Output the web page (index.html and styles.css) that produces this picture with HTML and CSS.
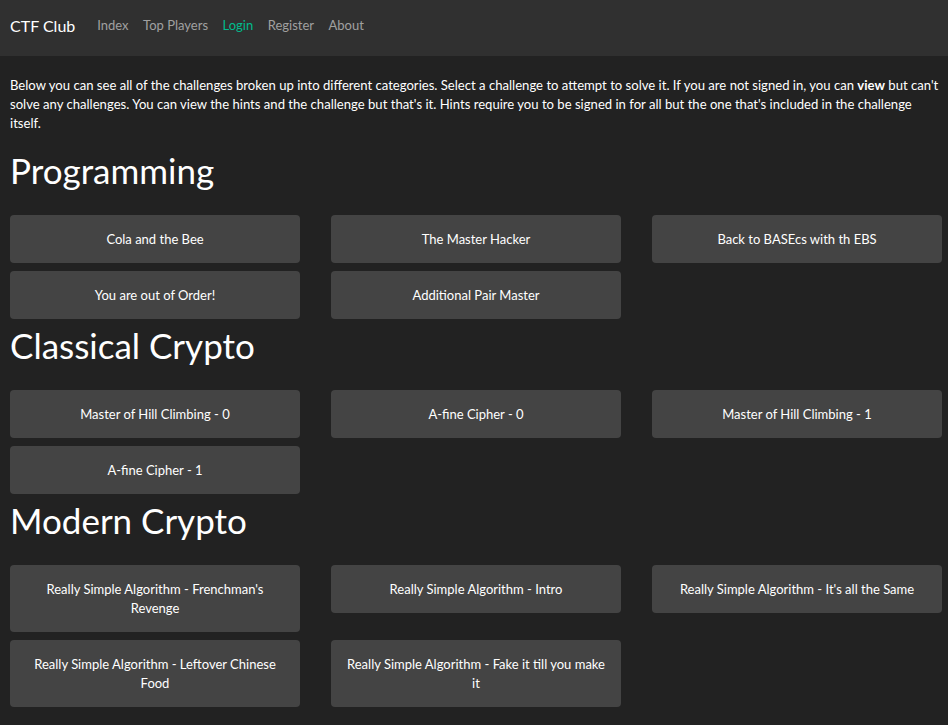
FILE: index.html
```html
<!DOCTYPE html>
<html lang="en">
<head>
<meta charset="utf-8">
<title>CTF Club</title>
<link rel="stylesheet" href="styles.css">
</head>
<body>
<nav class="navbar">
  <a class="brand" href="#">CTF Club</a>
  <ul class="nav">
    <li><a href="#">Index</a></li>
    <li><a href="#">Top Players</a></li>
    <li><a class="active" href="#">Login</a></li>
    <li><a href="#">Register</a></li>
    <li><a href="#">About</a></li>
  </ul>
</nav>
<main class="content">
  <p class="intro">Below you can see all of the challenges broken up into different categories. Select a challenge to attempt to solve it. If you are not signed in, you can <b>view</b> but can't solve any challenges. You can view the hints and the challenge but that's it. Hints require you to be signed in for all but the one that's included in the challenge itself.</p>

  <h2 class="category first">Programming</h2>
  <div class="grid">
    <a class="challenge" href="#">Cola and the Bee</a>
    <a class="challenge" href="#">The Master Hacker</a>
    <a class="challenge" href="#">Back to BASEcs with th EBS</a>
    <a class="challenge" href="#">You are out of Order!</a>
    <a class="challenge" href="#">Additional Pair Master</a>
  </div>

  <h2 class="category">Classical Crypto</h2>
  <div class="grid">
    <a class="challenge" href="#">Master of Hill Climbing - 0</a>
    <a class="challenge" href="#">A-fine Cipher - 0</a>
    <a class="challenge" href="#">Master of Hill Climbing - 1</a>
    <a class="challenge" href="#">A-fine Cipher - 1</a>
  </div>

  <h2 class="category">Modern Crypto</h2>
  <div class="grid">
    <a class="challenge" href="#">Really Simple Algorithm - Frenchman's Revenge</a>
    <a class="challenge" href="#">Really Simple Algorithm - Intro</a>
    <a class="challenge" href="#">Really Simple Algorithm - It's all the Same</a>
    <a class="challenge" href="#">Really Simple Algorithm - Leftover Chinese Food</a>
    <a class="challenge" href="#">Really Simple Algorithm - Fake it till you make it</a>
  </div>
</main>
</body>
</html>
```

FILE: styles.css
```css
* {
  box-sizing: border-box;
}

html, body {
  margin: 0;
  padding: 0;
  background: #222222;
  color: #ffffff;
  font-family: Lato, "Open Sans", "Liberation Sans", sans-serif;
  font-size: 13px;
  line-height: 19px;
}

.navbar {
  height: 56px;
  background: #303030;
  display: flex;
  align-items: center;
  padding: 0 10px 5px;
}

.brand {
  color: #ffffff;
  text-decoration: none;
  font-size: 16px;
  line-height: 24px;
  margin-right: 22px;
}

.nav {
  display: flex;
  gap: 14.5px;
  list-style: none;
  margin: 0;
  padding: 0;
}

.nav a {
  color: #a0a0a0;
  text-decoration: none;
  font-size: 13px;
}

.nav a.active {
  color: #00bc8c;
}

.content {
  padding: 0 3px 20px 10px;
}

.intro {
  margin: 20px 0 0;
  font-size: 13.1px;
}

.intro b {
  font-weight: 700;
}

.category {
  font-size: 35px;
  font-weight: 400;
  line-height: 1.2;
  margin: 5px 0 24px;
}

.category.first {
  margin-top: 16px;
}

.grid {
  display: grid;
  grid-template-columns: repeat(3, 290px);
  column-gap: 31px;
  row-gap: 8px;
  align-items: start;
}

.challenge {
  display: block;
  background: #444444;
  color: #ffffff;
  text-decoration: none;
  text-align: center;
  border-radius: 4px;
  padding: 14.5px 12px;
  line-height: 19px;
}
```
